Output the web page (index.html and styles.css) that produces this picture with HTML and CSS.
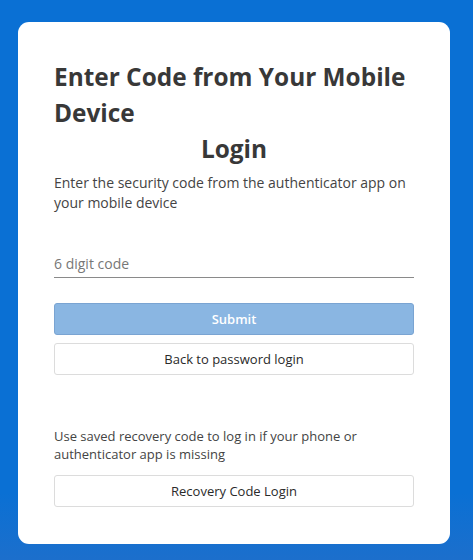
FILE: index.html
```html
<!DOCTYPE html>
<html>
<head>
<meta charset="utf-8">
<link rel="stylesheet" href="styles.css">
</head>
<body>
<div class="page">
  <div class="card">
    <h1 class="title">Enter Code from Your Mobile Device</h1>
    <div class="subtitle">Login</div>
    <p class="desc">Enter the security code from the authenticator app on your mobile device</p>
    <div class="field">
      <input class="code-input" type="text" placeholder="6 digit code">
    </div>
    <button class="btn btn-primary">Submit</button>
    <button class="btn btn-secondary">Back to password login</button>
    <p class="recovery-text">Use saved recovery code to log in if your phone or authenticator app is missing</p>
    <button class="btn btn-secondary">Recovery Code Login</button>
  </div>
</div>
</body>
</html>
```
FILE: styles.css
```css
* { box-sizing: border-box; }
html, body { margin: 0; padding: 0; }
body {
  font-family: "Open Sans", "Liberation Sans", sans-serif;
  background: #0a70d4;
  width: 473px;
  height: 560px;
  overflow: hidden;
}
.page {
  height: 560px;
  padding: 22px 23px 0 18px;
  background:
    radial-gradient(ellipse 420px 60px at 20% 115%, #1c80dc 0%, #1c80dc 60%, rgba(28,128,220,0) 62%),
    radial-gradient(ellipse 500px 70px at 90% 120%, #1a7bd8 0%, #1a7bd8 60%, rgba(26,123,216,0) 62%),
    linear-gradient(#0a70d4, #0a70d4 88%, #1c6fcc 100%);
}
.card {
  width: 432px;
  background: #fff;
  border-radius: 11px;
  padding: 37px 36px 37px 36px;
  display: flex;
  flex-direction: column;
}
.title {
  margin: 0;
  font-size: 24.4px;
  line-height: 36px;
  font-weight: 700;
  color: #383838;
}
.subtitle {
  font-size: 24.4px;
  line-height: 36px;
  font-weight: 700;
  color: #383838;
  text-align: center;
}
.desc {
  margin: 6px 0 0;
  font-size: 14px;
  line-height: 20px;
  color: #444;
}
.field {
  margin-top: 31px;
  border-bottom: 1px solid #8a8a8a;
}
.code-input {
  width: 100%;
  border: none;
  outline: none;
  padding: 6px 0 0;
  height: 33px;
  font-family: inherit;
  font-size: 14px;
  color: #333;
  background: transparent;
}
.code-input::placeholder { color: #777; }
.btn {
  width: 100%;
  height: 32px;
  border-radius: 3px;
  font-family: inherit;
  font-size: 13px;
  cursor: pointer;
}
.btn-primary {
  margin-top: 25px;
  background: #8ab6e2;
  border: 1px solid #7aa4d2;
  color: #fff;
  font-weight: 600;
}
.btn-secondary {
  margin-top: 8px;
  background: #fff;
  border: 1px solid #dcdcdc;
  color: #2a2a2a;
  font-weight: 500;
}
.recovery-text {
  margin: 52px 0 0;
  font-size: 13px;
  line-height: 18px;
  color: #444;
}
.recovery-text + .btn { margin-top: 12px; }
```
